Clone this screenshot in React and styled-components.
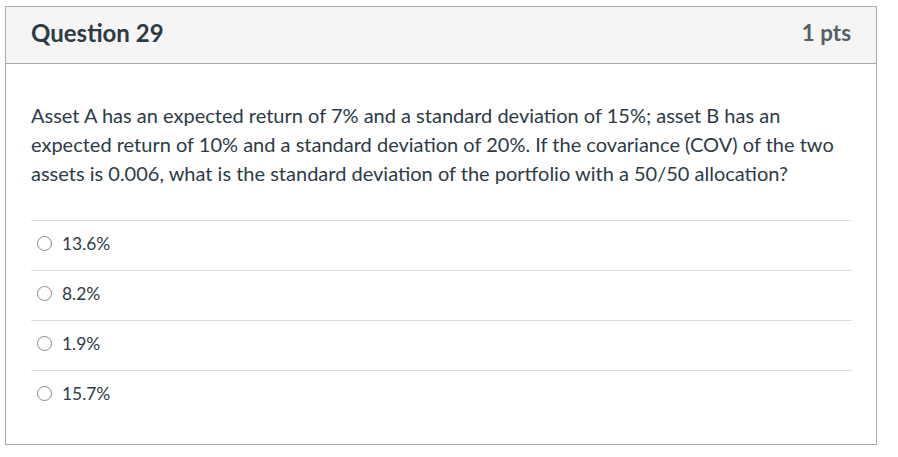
import React from 'react';
import styled, { createGlobalStyle } from 'styled-components';

const GlobalStyle = createGlobalStyle`
  html, body {
    margin: 0;
    padding: 0;
    background: #ffffff;
  }
  body {
    font-family: Lato, "Open Sans", "Liberation Sans", sans-serif;
    color: #2d3b45;
  }
`

const Page = styled.div`
  padding: 6px 0 0 5px;
`
const Card = styled.div`
  width: 870px;
  height: 437px;
  border: 1px solid #aaaaaa;
  background: #ffffff;
  display: flex;
  flex-direction: column;
`
const Header = styled.div`
  box-sizing: border-box;
  display: flex;
  align-items: center;
  justify-content: space-between;
  height: 57px;
  padding: 0 25px 5px 25px;
  background: #f5f5f5;
  border-bottom: 1px solid #aaaaaa;
`
const Title = styled.h2`
  margin: 0;
  font-size: 24px;
  font-weight: 700;
  color: #2d3b45;
`
const Points = styled.span`
  font-size: 22.4px;
  font-weight: 700;
  color: #555f66;
`
const Body = styled.div`
  padding: 37px 24px 0 25px;
`
const QuestionText = styled.p`
  margin: 0 0 32px 0;
  font-size: 20px;
  line-height: 29px;
  color: #2d3b45;
`
const AnswerList = styled.div`
  display: flex;
  flex-direction: column;
`
const AnswerRow = styled.label`
  display: flex;
  align-items: center;
  gap: 10px;
  height: 49px;
  padding-left: 6px;
  border-top: 1px solid #dddddd;
`
const Radio = styled.span`
  box-sizing: border-box;
  width: 15px;
  height: 15px;
  border-radius: 50%;
  border: 1.5px solid #8a8a8a;
  background: #ffffff;
  margin-top: -4px;
`
const AnswerText = styled.span`
  font-size: 17.4px;
  color: #2d3b45;
  margin-top: -4px;
`

const answers = ['13.6%', '8.2%', '1.9%', '15.7%'];

export default function App() {
  return (
    <>
      <GlobalStyle />
      <Page>
        <Card>
          <Header>
            <Title>Question 29</Title>
            <Points>1 pts</Points>
          </Header>
          <Body>
            <QuestionText>
              Asset A has an expected return of 7% and a standard deviation of 15%; asset B has an
              expected return of 10% and a standard deviation of 20%. If the covariance (COV) of the two
              assets is 0.006, what is the standard deviation of the portfolio with a 50/50 allocation?
            </QuestionText>
            <AnswerList>
              {answers.map(a => (
                <AnswerRow key={a}>
                  <Radio />
                  <AnswerText>{a}</AnswerText>
                </AnswerRow>
              ))}
            </AnswerList>
          </Body>
        </Card>
      </Page>
    </>
  );
}
